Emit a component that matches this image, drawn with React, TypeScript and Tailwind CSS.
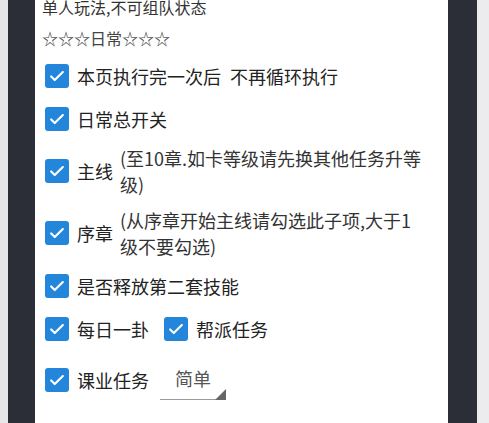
import type { ReactNode } from 'react'

const font = { fontFamily: '"Noto Sans CJK SC", "Noto Sans", sans-serif' }

function Check() {
  return (
    <span className="flex h-[24px] w-[24px] shrink-0 items-center justify-center rounded-[3px] bg-[#2386da]">
      <svg viewBox="0 0 24 24" className="h-[20px] w-[20px]">
        <path
          d="M5 12.5l4.3 4.3L19 7.3"
          fill="none"
          stroke="white"
          strokeWidth="2.6"
          strokeLinecap="round"
          strokeLinejoin="round"
        />
      </svg>
    </span>
  )
}

function Row({ children }: { children: ReactNode }) {
  return <div className="flex min-h-[43px] items-center py-[5px] pl-[3px]">{children}</div>
}

function Item({ label }: { label: string }) {
  return (
    <div className="flex items-center">
      <Check />
      <span className="ml-[8px] whitespace-pre text-[18px] leading-[26px] text-[#222]">{label}</span>
    </div>
  )
}

function Spinner({ value }: { value: string }) {
  return (
    <div className="relative ml-[11px] flex h-[49px] w-[66px] items-center justify-center pb-[3px]">
      <span className="text-[18px] leading-[26px] text-[#555]">{value}</span>
      <span className="absolute bottom-[4px] left-0 right-0 h-px bg-[#9a9a9a]" />
      <svg viewBox="0 0 11 11" className="absolute bottom-[4px] right-0 h-[11px] w-[11px]">
        <polygon points="11,0 11,11 0,11" fill="#666" />
      </svg>
    </div>
  )
}

export default function App() {
  return (
    <div className="flex h-[423px] w-[489px] overflow-hidden" style={font}>
      <div className="w-[8px] bg-[#e7e7e9]" />
      <div className="w-[27px] bg-[#2b2e37]" />
      <div className="flex w-[413px] flex-col bg-white pl-[7px] pr-[14px]">
        <p className="-mt-[3px] text-[16px] leading-[20px] text-[#333]">单人玩法,不可组队状态</p>
        <p className="mt-[11px] text-[16px] leading-[20px] text-[#444]">☆☆☆日常☆☆☆</p>

        <div className="mt-[6px] flex flex-col">
          <Row>
            <Item label={'本页执行完一次后\u2002不再循环执行'} />
          </Row>
          <Row>
            <Item label="日常总开关" />
          </Row>
          <Row>
            <Item label="主线" />
            <p className="ml-[7px] flex-1 text-[18px] leading-[26px] text-[#333]">
              (至10章.如卡等级请先换其他任务升等
              <br />
              级)
            </p>
          </Row>
          <Row>
            <Item label="序章" />
            <p className="ml-[7px] flex-1 text-[18px] leading-[26px] text-[#333]">
              (从序章开始主线请勾选此子项,大于1
              <br />
              级不要勾选)
            </p>
          </Row>
          <Row>
            <Item label="是否释放第二套技能" />
          </Row>
          <Row>
            <Item label="每日一卦" />
            <div className="ml-[15px]">
              <Item label="帮派任务" />
            </div>
          </Row>
          <Row>
            <Item label="课业任务" />
            <Spinner value="简单" />
          </Row>
        </div>
      </div>
      <div className="w-[29px] bg-[#2b2e37]" />
      <div className="w-[12px] bg-[#ececee]" />
    </div>
  )
}
